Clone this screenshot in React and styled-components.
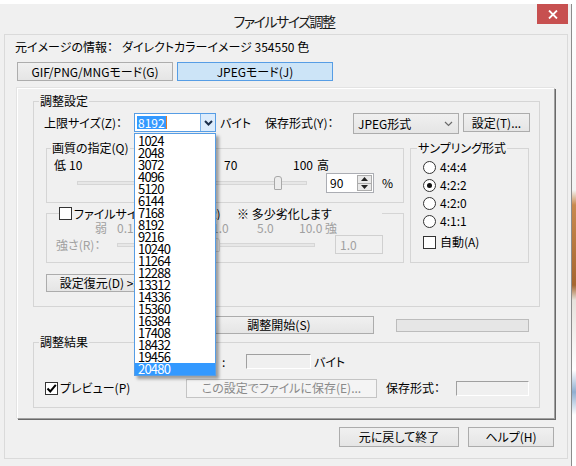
import React from "react";
import styled, { createGlobalStyle } from "styled-components";

const GlobalStyle = createGlobalStyle`
  html, body { margin: 0; padding: 0; background: #fff; }
  body {
    font-family: "Noto Sans CJK JP", "Liberation Sans", sans-serif;
    font-size: 12px;
    line-height: 14px;
    color: #000;
    font-feature-settings: "palt";
  }
  * { box-sizing: border-box; }
`;

const Desktop = styled.div`
  display: flex;
  width: 576px;
  height: 466px;
  overflow: hidden;
  background: #fff;
`;

const Wallpaper = styled.div`
  flex: 1;
  background: linear-gradient(
    to bottom,
    #ffffff 0px, #f4f4f4 190px, #c98a4e 205px, #a5662f 285px,
    #e7e2dc 300px, #ffffff 370px, #8eaed0 392px, #ffffff 415px
  );
`;

const Window = styled.div`
  flex: none;
  width: 572px;
  height: 462px;
  margin-top: 4px;
  background: #f0f0f0;
  border-right: 1px solid #8c8c8c;
  display: flex;
  flex-direction: column;
`;

const TitleBar = styled.div`
  height: 30px;
  display: grid;
  grid-template-columns: 1fr auto 1fr;
  padding-right: 3px;
`;

const Title = styled.div`
  grid-column: 2;
  padding-top: 7px;
  font-size: 14px;
  letter-spacing: -1.5px;
  line-height: 20px;
  color: #1a1a1a;
`;

const CloseButton = styled.div`
  grid-column: 3;
  justify-self: end;
  width: 31px;
  height: 20px;
  background: #c75050;
  display: flex;
  align-items: center;
  justify-content: center;
`;

const Client = styled.div`
  margin-left: 4px;
  width: 564px;
  height: 425px;
  border: 1px solid #dadada;
  display: flex;
  flex-direction: column;
`;

const InfoRow = styled.div`
  margin-top: 5px;
  padding-left: 10px;
  display: flex;
  line-height: 14px;
`;

const InfoLabel = styled.span`
  width: 107px;
`;

const TabRow = styled.div`
  margin-top: 8px;
  padding-left: 12px;
  display: flex;
  gap: 4px;
`;

const Tab = styled.div`
  width: 156px;
  height: 19px;
  display: flex;
  align-items: center;
  justify-content: center;
  border: 1px solid ${(p) => (p.$active ? "#569de5" : "#adadad")};
  background: ${(p) =>
    p.$active ? "#cce4f7" : "linear-gradient(#f0f0f0, #e5e5e5)"};
`;

const Panel = styled.div`
  margin-top: 7px;
  margin-left: 12px;
  width: 538px;
  height: 331px;
  border-style: solid;
  border-width: 1px;
  border-color: #ffffff #a0a0a0 #a0a0a0 #ffffff;
  box-shadow: 1px 1px 0 #696969, -1px -1px 0 #e3e3e3;
  display: flex;
  flex-direction: column;
`;

const Group = styled.fieldset`
  margin: ${(p) => p.$m || "0"};
  padding: 0;
  border: 1px solid #d5d5d5;
  min-width: 0;
  width: ${(p) => p.$w}px;
  height: ${(p) => p.$h}px;
  flex: none;
`;

const Legend = styled.legend`
  margin-left: ${(p) => p.$ml ?? 5}px;
  padding: 0 1px;
  line-height: 12px;
  font-size: 12px;
`;

const CheckLegend = styled.legend`
  margin-left: 12px;
  padding: 0;
  height: 13px;
  line-height: 13px;
  display: flex;
  align-items: center;
`;

const GroupBody = styled.div`
  padding-left: ${(p) => p.$pl || 0}px;
  display: flex;
  flex-direction: column;
`;

const Row = styled.div`
  display: flex;
  align-items: ${(p) => p.$align || "center"};
  margin-top: ${(p) => p.$mt || 0}px;
  margin-left: ${(p) => p.$ml || 0}px;
  padding-left: ${(p) => p.$pl || 0}px;
  height: ${(p) => (p.$h ? `${p.$h}px` : "auto")};
  width: ${(p) => (p.$w ? `${p.$w}px` : "auto")};
  flex: none;
  color: ${(p) => (p.$disabled ? "#a0a0a0" : "inherit")};
`;

const Label = styled.span`
  flex: none;
  width: ${(p) => (p.$w ? `${p.$w}px` : "auto")};
  margin-left: ${(p) => p.$ml || 0}px;
  line-height: ${(p) => p.$lh || 14}px;
  white-space: nowrap;
  overflow: ${(p) => (p.$clip ? "hidden" : "visible")};
  text-align: ${(p) => p.$align || "left"};
  padding-left: ${(p) => p.$pl || 0}px;
  color: ${(p) => (p.$disabled ? "#a0a0a0" : "inherit")};
`;

const Tick = styled.span`
  flex: none;
  width: ${(p) => (p.$w ? `${p.$w}px` : "auto")};
  line-height: 12px;
  white-space: nowrap;
`;

const Button = styled.div`
  flex: none;
  width: ${(p) => p.$w}px;
  height: ${(p) => p.$h || 19}px;
  margin-left: ${(p) => p.$ml || 0}px;
  margin-top: ${(p) => p.$mt || 0}px;
  display: flex;
  align-items: center;
  justify-content: center;
  white-space: nowrap;
  overflow: hidden;
  border: 1px solid ${(p) => (p.$disabled ? "#c4c4c4" : "#acacac")};
  background: ${(p) =>
    p.$disabled ? "#f4f4f4" : "linear-gradient(#f0f0f0, #e5e5e5)"};
  color: ${(p) => (p.$disabled ? "#8a8a8a" : "#000")};
`;

const ComboEdit = styled.div`
  position: relative;
  flex: none;
  width: 82px;
  height: 19px;
  border: 1px solid #569de5;
  background: #fff;
  display: flex;
`;

const EditArea = styled.div`
  flex: 1;
  padding-left: 2px;
  display: flex;
  align-items: center;
`;

const Selected = styled.span`
  background: #3399ff;
  color: #fff;
  line-height: 13px;
  padding: 0 1px;
`;

const Caret = styled.span`
  width: 1px;
  height: 13px;
  background: #e07b2a;
`;

const ArrowBox = styled.div`
  width: 15px;
  border-left: 1px solid #7eb4ea;
  background: #dcecfc;
  display: flex;
  align-items: center;
  justify-content: center;
`;

const DropList = styled.div`
  position: absolute;
  left: -1px;
  top: 19px;
  width: 82px;
  height: 243px;
  border: 1px solid #569de5;
  background: #fff;
  padding-top: 1px;
  box-shadow: 3px 3px 3px rgba(0, 0, 0, 0.35);
  z-index: 10;
  font-family: "Liberation Sans Narrow", "Noto Sans CJK JP", sans-serif;
  font-size: 13px;
  letter-spacing: -0.8px;
`;

const DropItem = styled.div`
  height: 12px;
  line-height: 12px;
  padding-left: 3px;
  background: ${(p) => (p.$sel ? "#3399ff" : "transparent")};
  color: ${(p) => (p.$sel ? "#fff" : "#000")};
`;

const Combo = styled.div`
  flex: none;
  width: 106px;
  height: 21px;
  border: 1px solid #acacac;
  background: linear-gradient(#f0f0f0, #e5e5e5);
  display: flex;
  align-items: center;
  justify-content: space-between;
  padding: 0 5px 0 4px;
`;

const Column = styled.div`
  display: flex;
  flex-direction: column;
  width: ${(p) => p.$w}px;
  flex: none;
`;

const TrackArea = styled.div`
  position: relative;
  flex: none;
  width: ${(p) => p.$w}px;
  height: ${(p) => p.$h}px;
  margin-left: ${(p) => p.$ml || 0}px;
  display: flex;
  align-items: center;
`;

const Track = styled.div`
  width: 100%;
  height: 4px;
  border: 1px solid #d6d6d6;
  background: #e7e7e7;
`;

const Thumb = styled.div`
  position: absolute;
  top: ${(p) => p.$top}px;
  width: 8px;
  height: 14px;
  border: 1px solid ${(p) => (p.$disabled ? "#cfcfcf" : "#a8a8a8")};
  border-radius: 3px 3px 1px 1px;
  background: ${(p) => (p.$disabled ? "#f0f0f0" : "#ececec")};
`;

const Spinner = styled.div`
  flex: none;
  margin-left: 19px;
  width: 48px;
  height: 20px;
  border: 1px solid #abadb3;
  background: #fff;
  display: flex;
`;

const SpinText = styled.div`
  flex: 1;
  padding-left: 3px;
  display: flex;
  align-items: center;
`;

const SpinButtons = styled.div`
  width: 15px;
  margin: 1px;
  display: flex;
  flex-direction: column;
  border: 1px solid #acacac;
  background: #e9e9e9;
`;

const SpinHalf = styled.div`
  flex: 1;
  display: flex;
  align-items: center;
  justify-content: center;
  border-top: ${(p) => (p.$bottom ? "1px solid #acacac" : "none")};
`;

const TextBox = styled.div`
  flex: none;
  width: ${(p) => p.$w}px;
  height: ${(p) => p.$h}px;
  margin-left: ${(p) => p.$ml || 0}px;
  display: flex;
  align-items: center;
  padding-left: 4px;
  color: #a0a0a0;
  background: #f0f0f0;
  border: 1px solid #d0d0d0;
`;

const SunkenBox = styled.div`
  flex: none;
  width: ${(p) => p.$w}px;
  height: ${(p) => p.$h}px;
  margin-left: ${(p) => p.$ml || 0}px;
  border-style: solid;
  border-width: 1px;
  border-color: #a0a0a0 #ffffff #ffffff #a0a0a0;
  background: #f0f0f0;
`;

const Box = styled.span`
  flex: none;
  width: 13px;
  height: 13px;
  border: 1px solid #333;
  background: #fff;
  display: flex;
  align-items: center;
  justify-content: center;
  border-radius: ${(p) => (p.$round ? "50%" : "0")};
`;

const Dot = styled.span`
  width: 5px;
  height: 5px;
  border-radius: 50%;
  background: #111;
`;

const Progress = styled.div`
  flex: none;
  margin-left: 22px;
  width: 133px;
  height: 13px;
  border: 1px solid #bcbcbc;
  background: #e6e6e6;
`;

const Footer = styled.div`
  margin-top: 8px;
  padding-right: 13px;
  display: flex;
  justify-content: flex-end;
  gap: 9px;
`;

const Check = ({ checked }) => (
  <Box>
    {checked && (
      <svg width="11" height="11" viewBox="0 0 11 11">
        <path d="M1.5 5.5 L4.3 8.5 L9.8 1.8" fill="none" stroke="#000" strokeWidth="2" />
      </svg>
    )}
  </Box>
);

const Radio = ({ checked }) => <Box $round>{checked && <Dot />}</Box>;

const Chevron = ({ bold }) => (
  <svg width="9" height="6" viewBox="0 0 9 6">
    <path
      d="M1 1 L4.5 4.5 L8 1"
      fill="none"
      stroke={bold ? "#1b2f4b" : "#6a6a6a"}
      strokeWidth={bold ? 2 : 1.2}
    />
  </svg>
);

const SIZES = Array.from({ length: 20 }, (_, i) => 1024 * (i + 1));
const QUALITY = 90;
const STRENGTH_POS = 0.5;
const SAMPLING = ["4:4:4", "4:2:2", "4:2:0", "4:1:1"];

export default function App() {
  const qualityLeft = Math.round(((QUALITY - 10) / 90) * (230 - 8));
  const strengthLeft = Math.round(STRENGTH_POS * (198 - 8));
  return (
    <>
      <GlobalStyle />
      <Desktop>
        <Window>
          <TitleBar>
            <Title>ファイルサイズ調整</Title>
            <CloseButton>
              <svg width="10" height="9" viewBox="0 0 10 9">
                <path d="M1 0.5 L9 8.5 M9 0.5 L1 8.5" stroke="#fff" strokeWidth="1.8" />
              </svg>
            </CloseButton>
          </TitleBar>
          <Client>
            <InfoRow>
              <InfoLabel>元イメージの情報：</InfoLabel>
              <span>ダイレクトカラーイメージ 354550 色</span>
            </InfoRow>
            <TabRow>
              <Tab>GIF/PNG/MNGモード(G)</Tab>
              <Tab $active>JPEGモード(J)</Tab>
            </TabRow>
            <Panel>
              <Group $m="6px 0 0 15px" $w={507} $h={212}>
                <Legend>調整設定</Legend>
                <GroupBody $pl={10}>
                  <Row $mt={6} $align="flex-start">
                    <Label $w={90} $lh={19}>上限サイズ(Z)：</Label>
                    <ComboEdit>
                      <EditArea>
                        <Selected>8192</Selected>
                        <Caret />
                      </EditArea>
                      <ArrowBox>
                        <Chevron bold />
                      </ArrowBox>
                      <DropList>
                        {SIZES.map((s) => (
                          <DropItem key={s} $sel={s === 20480}>
                            {s}
                          </DropItem>
                        ))}
                      </DropList>
                    </ComboEdit>
                    <Label $w={45} $ml={4} $lh={19}>バイト</Label>
                    <Label $w={88} $lh={19}>保存形式(Y)：</Label>
                    <Combo>
                      <span>JPEG形式</span>
                      <Chevron />
                    </Combo>
                    <Button $w={67} $ml={4}>設定(T)...</Button>
                  </Row>
                  <Row $mt={8} $ml={2} $align="flex-start">
                    <Column $w={358}>
                      <Group $w={358} $h={61}>
                        <Legend $ml={4}>画質の指定(Q)</Legend>
                        <GroupBody>
                          <Row $mt={5} $pl={7}>
                            <Tick $w={15}>低</Tick>
                            <Tick $w={155}>10</Tick>
                            <Tick $w={69}>70</Tick>
                            <Tick $w={24}>100</Tick>
                            <Tick>高</Tick>
                          </Row>
                          <Row $mt={2} $h={20}>
                            <TrackArea $w={230} $h={20} $ml={30}>
                              <Track />
                              <Thumb $top={3} style={{ left: qualityLeft }} />
                            </TrackArea>
                            <Spinner>
                              <SpinText>{QUALITY}</SpinText>
                              <SpinButtons>
                                <SpinHalf>
                                  <svg width="7" height="4" viewBox="0 0 7 4">
                                    <path d="M0 4 L3.5 0 L7 4 Z" fill="#222" />
                                  </svg>
                                </SpinHalf>
                                <SpinHalf $bottom>
                                  <svg width="7" height="4" viewBox="0 0 7 4">
                                    <path d="M0 0 L3.5 4 L7 0 Z" fill="#222" />
                                  </svg>
                                </SpinHalf>
                              </SpinButtons>
                            </Spinner>
                            <Label $ml={8}>%</Label>
                          </Row>
                        </GroupBody>
                      </Group>
                      <Group $m="4px 0 0 0" $w={358} $h={56}>
                        <CheckLegend>
                          <Check />
                          <Label $w={157} $ml={2} $lh={13} $clip>ファイルサイズ優先モード(R)</Label>
                          <Label $w={145} $ml={6} $lh={13}>※ 多少劣化します</Label>
                        </CheckLegend>
                        <GroupBody>
                          <Row $mt={2} $pl={48} $disabled>
                            <Tick $w={22}>弱</Tick>
                            <Tick $w={95}>0.1</Tick>
                            <Tick $w={45}>1.0</Tick>
                            <Tick $w={42}>5.0</Tick>
                            <Tick $w={26}>10.0</Tick>
                            <Tick>強</Tick>
                          </Row>
                          <Row $mt={1} $h={19}>
                            <Label $w={61} $ml={9} $disabled>強さ(R)：</Label>
                            <TrackArea $w={198} $h={19}>
                              <Track />
                              <Thumb $top={3} $disabled style={{ left: strengthLeft }} />
                            </TrackArea>
                            <TextBox $w={48} $h={19} $ml={20}>1.0</TextBox>
                          </Row>
                        </GroupBody>
                      </Group>
                      <Button $w={108} $h={18} $mt={11}>設定復元(D) &gt;&gt;</Button>
                    </Column>
                    <Group $m="0 0 0 6px" $w={119} $h={121}>
                      <Legend $ml={6}>サンプリング形式</Legend>
                      <GroupBody $pl={12}>
                        <Column $w={100}>
                          <Row $mt={4} />
                          {SAMPLING.map((s) => (
                            <Row key={s} $h={18}>
                              <Radio checked={s === "4:2:2"} />
                              <Label $ml={4}>{s}</Label>
                            </Row>
                          ))}
                          <Row $mt={2} $h={20}>
                            <Check />
                            <Label $ml={4}>自動(A)</Label>
                          </Row>
                        </Column>
                      </GroupBody>
                    </Group>
                  </Row>
                </GroupBody>
              </Group>
              <Row $mt={9} $pl={166}>
                <Button $w={190} $h={18}>調整開始(S)</Button>
                <Progress />
              </Row>
              <Group $m="2px 0 0 15px" $w={507} $h={72}>
                <Legend>調整結果</Legend>
                <GroupBody $pl={11}>
                  <Row $mt={6} $h={15}>
                    <Label $w={169} $align="right" $clip>ファイルサイズ</Label>
                    <Label $w={32} $pl={8}>:</Label>
                    <SunkenBox $w={65} $h={15} />
                    <Label $ml={3}>バイト</Label>
                  </Row>
                  <Row $mt={9} $h={20}>
                    <Row $h={20} $w={141}>
                      <Check checked />
                      <Label $ml={2}>プレビュー(P)</Label>
                    </Row>
                    <Button $w={191} $disabled>この設定でファイルに保存(E)...</Button>
                    <Label $w={70} $ml={9}>保存形式：</Label>
                    <SunkenBox $w={73} $h={15} />
                  </Row>
                </GroupBody>
              </Group>
            </Panel>
            <Footer>
              <Button $w={120} $h={20}>元に戻して終了</Button>
              <Button $w={86} $h={20}>ヘルプ(H)</Button>
            </Footer>
          </Client>
        </Window>
        <Wallpaper />
      </Desktop>
    </>
  );
}
